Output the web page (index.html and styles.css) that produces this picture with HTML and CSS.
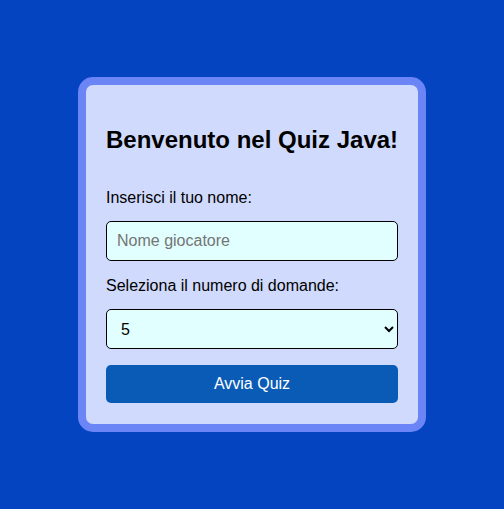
FILE: index.html
```html
<!DOCTYPE html>
<html lang="it">
<head>
<meta charset="utf-8">
<title>Quiz Java</title>
<link rel="stylesheet" href="styles.css">
</head>
<body>
<div class="card">
  <h2 class="title">Benvenuto nel Quiz Java!</h2>
  <label class="label" for="nome">Inserisci il tuo nome:</label>
  <input class="field" id="nome" type="text" placeholder="Nome giocatore">
  <label class="label" for="num">Seleziona il numero di domande:</label>
  <select class="field select" id="num">
    <option>5</option>
    <option>10</option>
    <option>15</option>
  </select>
  <button class="btn" type="button">Avvia Quiz</button>
</div>
</body>
</html>
```

FILE: styles.css
```css
html, body {
  margin: 0;
  padding: 0;
}
body {
  height: 100vh;
  background: #0444c0;
  display: flex;
  align-items: center;
  justify-content: center;
  font-family: "Liberation Sans", Arial, sans-serif;
}
.card {
  width: 292px;
  padding: 20px 20px 21px;
  background: #d0dafc;
  border: 8px solid #6b84f6;
  border-radius: 15px;
  display: flex;
  flex-direction: column;
}
.title {
  font-size: 24px;
  font-weight: bold;
  margin: 21px 0 35px;
  color: #000;
  white-space: nowrap;
}
.label {
  font-size: 16px;
  color: #000;
  margin-bottom: 14px;
}
.field {
  box-sizing: border-box;
  width: 100%;
  height: 40px;
  padding: 0 10px;
  font-family: inherit;
  font-size: 16px;
  background: #e0fffe;
  border: 1px solid #000;
  border-radius: 5px;
  margin-bottom: 16px;
  color: #000;
}
.field::placeholder {
  color: #757575;
}
.btn {
  height: 38px;
  border: none;
  border-radius: 5px;
  background: #0a5bb6;
  color: #fff;
  font-family: inherit;
  font-size: 16px;
}
```
